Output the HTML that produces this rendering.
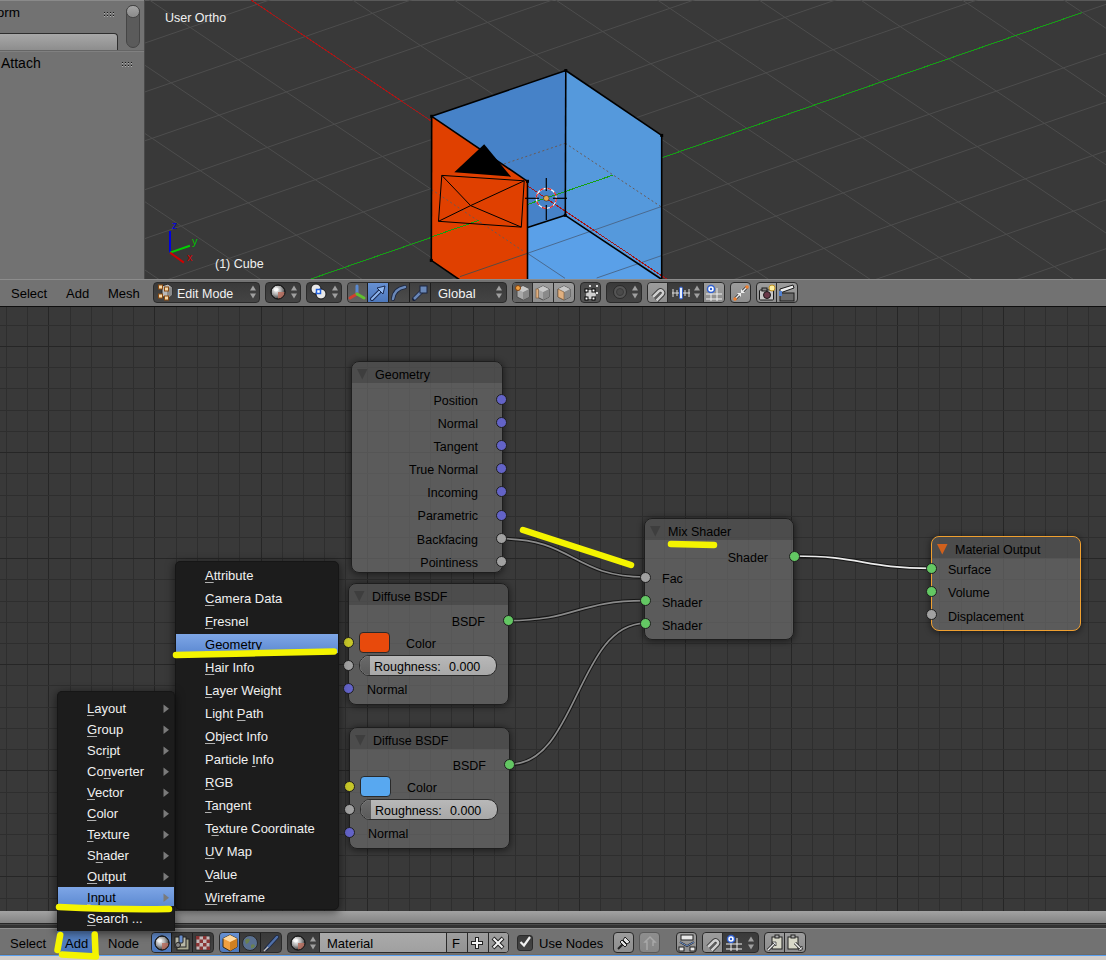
<!DOCTYPE html><html><head><meta charset="utf-8"><style>
*{margin:0;padding:0;box-sizing:border-box}
html,body{width:1106px;height:960px;overflow:hidden;background:#393939;font-family:"Liberation Sans", sans-serif;}
.a{position:absolute}
.t{position:absolute;white-space:nowrap;line-height:1;}
svg{position:absolute;left:0;top:0}
</style></head><body>

<div class="a" style="left:0;top:0;width:144px;height:279px;background:#727272"></div>
<div class="a" style="left:0;top:0;width:144px;height:1px;background:#8a8a8a"></div>
<div class="a" style="left:144px;top:0;width:1px;height:279px;background:#4a4a4a"></div>
<div class="t" style="left:-41px;top:6px;font-size:13.5px;color:#000">Transform</div>
<div class="a" style="left:-6px;top:33px;width:124px;height:17px;border:1px solid #2e2e2e;border-bottom:none;border-radius:4px 4px 0 0;background:linear-gradient(#a8a8a8,#8d8d8d)"></div>
<div class="a" style="left:0;top:50px;width:144px;height:1px;background:#656565"></div>
<div class="a" style="left:0;top:51px;width:144px;height:1px;background:#808080"></div>
<div class="t" style="left:1px;top:56px;font-size:14px;color:#000">Attach</div>
<div class="a" style="left:126px;top:5px;width:14px;height:43px;border:1px solid #454545;border-radius:7px;background:#5b5b5b"></div>
<div class="a" style="left:126px;top:5px;width:14px;height:13px;border:1px solid #454545;border-radius:7px;background:linear-gradient(#a5a5a5,#8a8a8a)"></div>
<div class="a" style="left:104px;top:12px;width:1px;height:1px;background:#1a1a1a"></div><div class="a" style="left:104px;top:13px;width:1px;height:1px;background:#b0b0b0"></div><div class="a" style="left:104px;top:15px;width:1px;height:1px;background:#1a1a1a"></div><div class="a" style="left:104px;top:16px;width:1px;height:1px;background:#b0b0b0"></div><div class="a" style="left:107px;top:12px;width:1px;height:1px;background:#1a1a1a"></div><div class="a" style="left:107px;top:13px;width:1px;height:1px;background:#b0b0b0"></div><div class="a" style="left:107px;top:15px;width:1px;height:1px;background:#1a1a1a"></div><div class="a" style="left:107px;top:16px;width:1px;height:1px;background:#b0b0b0"></div><div class="a" style="left:110px;top:12px;width:1px;height:1px;background:#1a1a1a"></div><div class="a" style="left:110px;top:13px;width:1px;height:1px;background:#b0b0b0"></div><div class="a" style="left:110px;top:15px;width:1px;height:1px;background:#1a1a1a"></div><div class="a" style="left:110px;top:16px;width:1px;height:1px;background:#b0b0b0"></div><div class="a" style="left:113px;top:12px;width:1px;height:1px;background:#1a1a1a"></div><div class="a" style="left:113px;top:13px;width:1px;height:1px;background:#b0b0b0"></div><div class="a" style="left:113px;top:15px;width:1px;height:1px;background:#1a1a1a"></div><div class="a" style="left:113px;top:16px;width:1px;height:1px;background:#b0b0b0"></div>
<div class="a" style="left:122px;top:62px;width:1px;height:1px;background:#1a1a1a"></div><div class="a" style="left:122px;top:63px;width:1px;height:1px;background:#b0b0b0"></div><div class="a" style="left:122px;top:65px;width:1px;height:1px;background:#1a1a1a"></div><div class="a" style="left:122px;top:66px;width:1px;height:1px;background:#b0b0b0"></div><div class="a" style="left:125px;top:62px;width:1px;height:1px;background:#1a1a1a"></div><div class="a" style="left:125px;top:63px;width:1px;height:1px;background:#b0b0b0"></div><div class="a" style="left:125px;top:65px;width:1px;height:1px;background:#1a1a1a"></div><div class="a" style="left:125px;top:66px;width:1px;height:1px;background:#b0b0b0"></div><div class="a" style="left:128px;top:62px;width:1px;height:1px;background:#1a1a1a"></div><div class="a" style="left:128px;top:63px;width:1px;height:1px;background:#b0b0b0"></div><div class="a" style="left:128px;top:65px;width:1px;height:1px;background:#1a1a1a"></div><div class="a" style="left:128px;top:66px;width:1px;height:1px;background:#b0b0b0"></div><div class="a" style="left:131px;top:62px;width:1px;height:1px;background:#1a1a1a"></div><div class="a" style="left:131px;top:63px;width:1px;height:1px;background:#b0b0b0"></div><div class="a" style="left:131px;top:65px;width:1px;height:1px;background:#1a1a1a"></div><div class="a" style="left:131px;top:66px;width:1px;height:1px;background:#b0b0b0"></div>
<div class="a" style="left:145px;top:0;width:961px;height:279px;background:#393939;overflow:hidden">
<div class="a" style="left:0;top:0;width:961px;height:1px;background:#595959"></div>
<svg width="961" height="279" viewBox="145 0 961 279" style="left:0;top:0">
<line x1="-2749.96" y1="-1196.64" x2="2230.84" y2="2148.76" stroke="#4d4d4d" stroke-width="1" /><line x1="-2682.86" y1="-1219.82" x2="2297.94" y2="2125.58" stroke="#4d4d4d" stroke-width="1" /><line x1="-2615.76" y1="-1243.00" x2="2365.04" y2="2102.40" stroke="#4d4d4d" stroke-width="1" /><line x1="-2548.66" y1="-1266.18" x2="2432.14" y2="2079.22" stroke="#4d4d4d" stroke-width="1" /><line x1="-2481.56" y1="-1289.36" x2="2499.24" y2="2056.04" stroke="#4d4d4d" stroke-width="1" /><line x1="-2414.46" y1="-1312.54" x2="2566.34" y2="2032.86" stroke="#4d4d4d" stroke-width="1" /><line x1="-2347.36" y1="-1335.72" x2="2633.44" y2="2009.68" stroke="#4d4d4d" stroke-width="1" /><line x1="-2280.26" y1="-1358.90" x2="2700.54" y2="1986.50" stroke="#4d4d4d" stroke-width="1" /><line x1="-2213.16" y1="-1382.08" x2="2767.64" y2="1963.32" stroke="#4d4d4d" stroke-width="1" /><line x1="-2146.06" y1="-1405.26" x2="2834.74" y2="1940.14" stroke="#4d4d4d" stroke-width="1" /><line x1="-2078.96" y1="-1428.44" x2="2901.84" y2="1916.96" stroke="#4d4d4d" stroke-width="1" /><line x1="-2011.86" y1="-1451.62" x2="2968.94" y2="1893.78" stroke="#4d4d4d" stroke-width="1" /><line x1="-1944.76" y1="-1474.80" x2="3036.04" y2="1870.60" stroke="#4d4d4d" stroke-width="1" /><line x1="-1877.66" y1="-1497.98" x2="3103.14" y2="1847.42" stroke="#4d4d4d" stroke-width="1" /><line x1="-1810.56" y1="-1521.16" x2="3170.24" y2="1824.24" stroke="#4d4d4d" stroke-width="1" /><line x1="-1743.46" y1="-1544.34" x2="3237.34" y2="1801.06" stroke="#4d4d4d" stroke-width="1" /><line x1="-1676.36" y1="-1567.52" x2="3304.44" y2="1777.88" stroke="#4d4d4d" stroke-width="1" /><line x1="-1609.26" y1="-1590.70" x2="3371.54" y2="1754.70" stroke="#4d4d4d" stroke-width="1" /><line x1="-1542.16" y1="-1613.88" x2="3438.64" y2="1731.52" stroke="#4d4d4d" stroke-width="1" /><line x1="-1475.06" y1="-1637.06" x2="3505.74" y2="1708.34" stroke="#4d4d4d" stroke-width="1" /><line x1="-1407.96" y1="-1660.24" x2="3572.84" y2="1685.16" stroke="#4d4d4d" stroke-width="1" /><line x1="-1340.86" y1="-1683.42" x2="3639.94" y2="1661.98" stroke="#4d4d4d" stroke-width="1" /><line x1="-1273.76" y1="-1706.60" x2="3707.04" y2="1638.80" stroke="#4d4d4d" stroke-width="1" /><line x1="-1206.66" y1="-1729.78" x2="3774.14" y2="1615.62" stroke="#4d4d4d" stroke-width="1" /><line x1="-1139.56" y1="-1752.96" x2="3841.24" y2="1592.44" stroke="#4d4d4d" stroke-width="1" /><line x1="-1072.46" y1="-1776.14" x2="3908.34" y2="1569.26" stroke="#4d4d4d" stroke-width="1" /><line x1="-2962.77" y1="725.54" x2="2708.37" y2="-1233.58" stroke="#4d4d4d" stroke-width="1" /><line x1="-2914.71" y1="757.82" x2="2756.43" y2="-1201.30" stroke="#4d4d4d" stroke-width="1" /><line x1="-2866.65" y1="790.10" x2="2804.49" y2="-1169.02" stroke="#4d4d4d" stroke-width="1" /><line x1="-2818.59" y1="822.38" x2="2852.55" y2="-1136.74" stroke="#4d4d4d" stroke-width="1" /><line x1="-2770.53" y1="854.66" x2="2900.61" y2="-1104.46" stroke="#4d4d4d" stroke-width="1" /><line x1="-2722.47" y1="886.94" x2="2948.67" y2="-1072.18" stroke="#4d4d4d" stroke-width="1" /><line x1="-2674.41" y1="919.22" x2="2996.73" y2="-1039.90" stroke="#4d4d4d" stroke-width="1" /><line x1="-2626.35" y1="951.50" x2="3044.79" y2="-1007.62" stroke="#4d4d4d" stroke-width="1" /><line x1="-2578.29" y1="983.78" x2="3092.85" y2="-975.34" stroke="#4d4d4d" stroke-width="1" /><line x1="-2530.23" y1="1016.06" x2="3140.91" y2="-943.06" stroke="#4d4d4d" stroke-width="1" /><line x1="-2482.17" y1="1048.34" x2="3188.97" y2="-910.78" stroke="#4d4d4d" stroke-width="1" /><line x1="-2434.11" y1="1080.62" x2="3237.03" y2="-878.50" stroke="#4d4d4d" stroke-width="1" /><line x1="-2386.05" y1="1112.90" x2="3285.09" y2="-846.22" stroke="#4d4d4d" stroke-width="1" /><line x1="-2337.99" y1="1145.18" x2="3333.15" y2="-813.94" stroke="#4d4d4d" stroke-width="1" /><line x1="-2289.93" y1="1177.46" x2="3381.21" y2="-781.66" stroke="#4d4d4d" stroke-width="1" /><line x1="-2241.87" y1="1209.74" x2="3429.27" y2="-749.38" stroke="#4d4d4d" stroke-width="1" /><line x1="-2193.81" y1="1242.02" x2="3477.33" y2="-717.10" stroke="#4d4d4d" stroke-width="1" /><line x1="-2145.75" y1="1274.30" x2="3525.39" y2="-684.82" stroke="#4d4d4d" stroke-width="1" /><line x1="-2097.69" y1="1306.58" x2="3573.45" y2="-652.54" stroke="#4d4d4d" stroke-width="1" /><line x1="-2049.63" y1="1338.86" x2="3621.51" y2="-620.26" stroke="#4d4d4d" stroke-width="1" /><line x1="-2001.57" y1="1371.14" x2="3669.57" y2="-587.98" stroke="#4d4d4d" stroke-width="1" /><line x1="-1953.51" y1="1403.42" x2="3717.63" y2="-555.70" stroke="#4d4d4d" stroke-width="1" /><line x1="-1905.45" y1="1435.70" x2="3765.69" y2="-523.42" stroke="#4d4d4d" stroke-width="1" /><line x1="-1857.39" y1="1467.98" x2="3813.75" y2="-491.14" stroke="#4d4d4d" stroke-width="1" /><line x1="-1809.33" y1="1500.26" x2="3861.81" y2="-458.86" stroke="#4d4d4d" stroke-width="1" /><line x1="-1761.27" y1="1532.54" x2="3909.87" y2="-426.58" stroke="#4d4d4d" stroke-width="1" /><line x1="-1713.21" y1="1564.82" x2="3957.93" y2="-394.30" stroke="#4d4d4d" stroke-width="1" /><line x1="-1665.15" y1="1597.10" x2="4005.99" y2="-362.02" stroke="#4d4d4d" stroke-width="1" />
<line x1="-1944.76" y1="-1474.80" x2="3036.04" y2="1870.60" stroke="#a81616" stroke-width="1" shape-rendering="crispEdges"/>
<line x1="545.64" y1="197.9" x2="1082.44" y2="12.46" stroke="#14a014" stroke-width="1" shape-rendering="crispEdges"/>
<line x1="545.64" y1="197.9" x2="143.04000000000002" y2="336.98" stroke="#14a014" stroke-width="1" shape-rendering="crispEdges"/>
<polygon points="431.7,116.3 565.8,70.5 565.3,215.3 527.5,227.5 527.5,181.3" fill="#4682c8" />
<polygon points="565.8,70.5 661.7,135.4 661.7,280.0 664.0,280.0 565.3,215.3" fill="#5599dc" />
<polygon points="565.3,215.3 664.0,280.0 527.5,280.0 527.5,227.5" fill="#5aa0e8" />
<polygon points="431.7,116.3 527.5,181.3 527.5,280.0 460.0,280.0 431.3,260.4" fill="#e04000" />
<g stroke="#6a5a55" stroke-width="1" stroke-dasharray="2,2.5">
<line x1="504" y1="164" x2="565.3" y2="143.3"/><line x1="565.3" y1="143.3" x2="661" y2="206.7"/><line x1="431.5" y1="189.5" x2="525" y2="252.3"/>
</g>
<g stroke="#4a6a90" stroke-width="1">
<line x1="527.5" y1="253.3" x2="460" y2="276.6" stroke="#5a4a40"/><line x1="661" y1="206.7" x2="527.5" y2="253.3"/><line x1="527.5" y1="253.3" x2="565" y2="278.3"/><line x1="661" y1="255.8" x2="596.7" y2="278"/>
</g>
<line x1="527" y1="185.5" x2="665" y2="278" stroke="#a81616" stroke-width="1" shape-rendering="crispEdges"/>
<line x1="527" y1="204.6" x2="613.3" y2="175" stroke="#14a014" stroke-width="1" shape-rendering="crispEdges"/>
<line x1="432" y1="236.7" x2="479" y2="220.4" stroke="#14a014" stroke-width="1" shape-rendering="crispEdges"/>
<g stroke="#000" stroke-width="1.6" fill="none">
<line x1="431.7" y1="116.3" x2="565.8" y2="70.5"/>
<line x1="565.8" y1="70.5" x2="661.7" y2="135.4"/>
<line x1="661.7" y1="135.4" x2="661.7" y2="280"/>
<line x1="431.7" y1="116.3" x2="431.3" y2="260.4"/>
<line x1="431.3" y1="260.4" x2="460" y2="280"/>
<line x1="431.7" y1="116.3" x2="527.5" y2="181.3"/>
<line x1="527.5" y1="181.3" x2="527.5" y2="280"/>
<line x1="565.8" y1="70.5" x2="565.3" y2="215.3"/>
<line x1="565.3" y1="215.3" x2="527.5" y2="227.5"/>
<line x1="565.3" y1="215.3" x2="661" y2="279"/>
</g>
<rect x="430.2" y="114.8" width="3" height="3" fill="#000"/>
<rect x="564.3" y="69.0" width="3" height="3" fill="#000"/>
<rect x="660.2" y="133.9" width="3" height="3" fill="#000"/>
<rect x="526.0" y="179.8" width="3" height="3" fill="#000"/>
<rect x="563.8" y="213.8" width="3" height="3" fill="#000"/>
<rect x="429.8" y="258.9" width="3" height="3" fill="#000"/>
<polygon points="484.2,144.3 454.3,172.3 511.1,176.7" fill="#000" />
<g stroke="#000" stroke-width="1" fill="none"><polygon points="441.8,175.4 524.2,180.8 521.3,227.1 438.5,221.3"/><polyline points="441.8,175.4 470.6,205.6 521.3,227.1"/><polyline points="524.2,180.8 470.6,205.6 438.5,221.3"/></g>
<circle cx="546.3" cy="198.3" r="10" fill="none" stroke="#fff" stroke-width="1.2"/>
<circle cx="546.3" cy="198.3" r="10" fill="none" stroke="#e02020" stroke-width="1.2" stroke-dasharray="4,4"/>
<g stroke="#000" stroke-width="1.2"><line x1="546.3" y1="178" x2="546.3" y2="191"/><line x1="546.3" y1="205" x2="546.3" y2="220"/><line x1="525" y1="198.3" x2="539" y2="198.3"/><line x1="553" y1="198.3" x2="567" y2="198.3"/></g>
<circle cx="546.3" cy="198.3" r="2.8" fill="#e8a84c" stroke="#222" stroke-width="0.6"/>
<line x1="170" y1="252.6" x2="170" y2="231" stroke="#0000e0" stroke-width="2"/>
<line x1="170" y1="252.6" x2="189.9" y2="245.8" stroke="#00d000" stroke-width="2"/>
<line x1="170" y1="252.6" x2="183.9" y2="262.6" stroke="#d00000" stroke-width="2"/>
</svg>
<div class="t" style="left:20px;top:12px;font-size:12.5px;color:#f0f0f0">User Ortho</div>
<div class="t" style="left:70px;top:258px;font-size:12.5px;color:#f0f0f0">(1) Cube</div>
<div class="t" style="left:27px;top:221px;font-size:10px;color:#0000e0">z</div>
<div class="t" style="left:47px;top:236px;font-size:11px;color:#00c000">y</div>
<div class="t" style="left:42px;top:252px;font-size:11px;color:#d00000">x</div>
</div>
<div class="a" style="left:0;top:279px;width:1106px;height:27px;background:#727272"></div>
<div class="a" style="left:0;top:279px;width:1106px;height:1px;background:#8c8c8c"></div>
<div class="a" style="left:0;top:306px;width:1106px;height:1px;background:#0e0e0e"></div>
<div class="t" style="left:11px;top:287px;font-size:13px;color:#000">Select</div>
<div class="t" style="left:66px;top:287px;font-size:13px;color:#000">Add</div>
<div class="t" style="left:108px;top:287px;font-size:13px;color:#000">Mesh</div>
<div class="a" style="left:153px;top:282px;width:107px;height:21px;background:linear-gradient(#3a3a3a,#444444);border:1px solid #2a2a2a;border-radius:4px;"></div>
<svg width="12" height="16" style="left:247px;top:284px"><polygon points="6,1.5 9,6.5 3,6.5" fill="#a0a0a0"/><polygon points="6,14.5 9,9.5 3,9.5" fill="#a0a0a0"/></svg>
<div class="t" style="left:177px;top:288px;font-size:12.5px;color:#f2f2f2">Edit Mode</div>
<svg width="18" height="18" style="left:157px;top:283px"><polygon points="5,3 11,1 15,4 15,12 10,16 5,13" fill="#b8b8b8" stroke="#2a2a2a" stroke-width="1"/><polygon points="10,5 15,4 15,12 10,16" fill="#8a8a8a"/><rect x="1.5" y="2" width="4" height="4" fill="#f5d8a8" stroke="#8a4a10"/><rect x="7.5" y="4" width="4" height="4" fill="#f5d8a8" stroke="#8a4a10"/><rect x="1.5" y="11" width="4" height="4" fill="#f5d8a8" stroke="#8a4a10"/><rect x="7.5" y="13" width="4" height="4" fill="#f5d8a8" stroke="#8a4a10"/></svg>
<div class="a" style="left:265px;top:282px;width:36px;height:21px;background:linear-gradient(#3a3a3a,#444444);border:1px solid #2a2a2a;border-radius:4px;"></div>
<svg width="12" height="16" style="left:288px;top:284px"><polygon points="6,1.5 9,6.5 3,6.5" fill="#a0a0a0"/><polygon points="6,14.5 9,9.5 3,9.5" fill="#a0a0a0"/></svg>
<svg width="16" height="16" style="left:270px;top:284px"><defs><radialGradient id="sph" cx="38%" cy="35%" r="65%"><stop offset="0" stop-color="#ffffff"/><stop offset="0.5" stop-color="#b0b0b0"/><stop offset="1" stop-color="#3a3a3a"/></radialGradient><radialGradient id="sphr" cx="38%" cy="35%" r="65%"><stop offset="0" stop-color="#ffe0d0"/><stop offset="0.5" stop-color="#c07060"/><stop offset="1" stop-color="#5a2a20"/></radialGradient></defs><circle cx="8" cy="8" r="7" fill="url(#sph)" stroke="#1a1a1a"/><path d="M8,8 L15,8 A7,7 0 0 1 8,15 Z" fill="#b87060" opacity="0.85"/><circle cx="8" cy="8" r="7" fill="none" stroke="#1a1a1a"/><ellipse cx="6" cy="5.5" rx="2.5" ry="2" fill="#fff" opacity="0.7"/></svg>
<div class="a" style="left:306px;top:282px;width:36px;height:21px;background:linear-gradient(#3a3a3a,#444444);border:1px solid #2a2a2a;border-radius:4px;"></div>
<svg width="12" height="16" style="left:329px;top:284px"><polygon points="6,1.5 9,6.5 3,6.5" fill="#a0a0a0"/><polygon points="6,14.5 9,9.5 3,9.5" fill="#a0a0a0"/></svg>
<svg width="18" height="18" style="left:310px;top:283px"><circle cx="6" cy="6" r="5" fill="#e8e8e8" stroke="#1a1a1a"/><circle cx="11" cy="11" r="5" fill="#e8e8e8" stroke="#1a1a1a"/><rect x="6.5" y="6.5" width="4" height="4" fill="#fff" stroke="#2060e0" stroke-width="1.5"/></svg>
<div class="a" style="left:347px;top:282px;width:160px;height:21px;background:linear-gradient(#3a3a3a,#444444);border:1px solid #2a2a2a;border-radius:4px;"></div>
<div class="a" style="left:348px;top:283px;width:19px;height:19px;background:linear-gradient(#585858,#626262);border-radius:3px 0 0 3px"></div>
<div class="a" style="left:368px;top:283px;width:20px;height:19px;background:linear-gradient(#6690d2,#4d78bc)"></div>
<div class="a" style="left:389px;top:283px;width:20px;height:19px;background:linear-gradient(#404040,#4c4c4c)"></div>
<div class="a" style="left:410px;top:283px;width:20px;height:19px;background:linear-gradient(#404040,#4c4c4c)"></div>
<div class="a" style="left:367px;top:283px;width:1px;height:19px;background:#1e1e1e"></div>
<div class="a" style="left:388px;top:283px;width:1px;height:19px;background:#1e1e1e"></div>
<div class="a" style="left:409px;top:283px;width:1px;height:19px;background:#1e1e1e"></div>
<div class="a" style="left:430px;top:283px;width:1px;height:19px;background:#1e1e1e"></div>
<svg width="20" height="20" style="left:347px;top:283px"><line x1="10" y1="11" x2="10" y2="3" stroke="#5a8ad0" stroke-width="3" stroke-linecap="round"/><line x1="10" y1="11" x2="3" y2="15" stroke="#d04030" stroke-width="3" stroke-linecap="round"/><line x1="10" y1="11" x2="17" y2="15" stroke="#60c030" stroke-width="3" stroke-linecap="round"/></svg>
<svg width="20" height="20" style="left:368px;top:283px"><line x1="4" y1="16" x2="13" y2="7" stroke="#1a2a50" stroke-width="4" stroke-linecap="round"/><line x1="4" y1="16" x2="13" y2="7" stroke="#90b8f0" stroke-width="2" stroke-linecap="round"/><polygon points="17,3 9,5 15,11" fill="#90b8f0" stroke="#1a2a50"/></svg>
<svg width="20" height="20" style="left:389px;top:283px"><path d="M4,16 Q5,6 16,4" fill="none" stroke="#1a2540" stroke-width="4" stroke-linecap="round"/><path d="M4,16 Q5,6 16,4" fill="none" stroke="#6a88b8" stroke-width="2.5" stroke-linecap="round"/></svg>
<svg width="20" height="20" style="left:410px;top:283px"><line x1="4" y1="16" x2="12" y2="8" stroke="#1a2540" stroke-width="4" stroke-linecap="round"/><line x1="4" y1="16" x2="12" y2="8" stroke="#6a88b8" stroke-width="2.5"/><rect x="10" y="3" width="7" height="7" fill="#6a88b8" stroke="#1a2540"/></svg>
<div class="t" style="left:438px;top:287px;font-size:13px;color:#f2f2f2">Global</div>
<svg width="12" height="16" style="left:493px;top:284px"><polygon points="6,1.5 9,6.5 3,6.5" fill="#a0a0a0"/><polygon points="6,14.5 9,9.5 3,9.5" fill="#a0a0a0"/></svg>
<div class="a" style="left:512px;top:282px;width:63px;height:21px;background:linear-gradient(#9c9c9c,#8e8e8e);border:1px solid #2a2a2a;border-radius:4px;"></div>
<div class="a" style="left:513px;top:283px;width:19px;height:19px;background:linear-gradient(#5a5a5a,#646464);border-radius:3px 0 0 3px"></div>
<div class="a" style="left:532px;top:283px;width:1px;height:19px;background:#2a2a2a"></div>
<div class="a" style="left:553px;top:283px;width:1px;height:19px;background:#2a2a2a"></div>
<svg width="18" height="18" style="left:514px;top:284px"><polygon points="9,2 15,5 15,13 9,16 3,13 3,5" fill="#a8a8a8" stroke="#4a4a4a"/><polygon points="9,8 15,5 15,13 9,16" fill="#8a8a8a"/><polygon points="9,2 15,5 9,8 3,5" fill="#c8c8c8"/><circle cx="4" cy="4" r="2.5" fill="#f0a040" stroke="#804010"/></svg>
<svg width="18" height="18" style="left:534px;top:284px"><polygon points="9,2 15,5 15,13 9,16 3,13 3,5" fill="#a8a8a8" stroke="#4a4a4a"/><polygon points="9,8 15,5 15,13 9,16" fill="#8a8a8a"/><polygon points="9,2 15,5 9,8 3,5" fill="#c8c8c8"/><rect x="2" y="5" width="2.5" height="9" fill="#e0b080" stroke="#806040" stroke-width="0.7"/></svg>
<svg width="18" height="18" style="left:555px;top:284px"><polygon points="9,2 15,5 15,13 9,16 3,13 3,5" fill="#a8a8a8" stroke="#4a4a4a"/><polygon points="9,8 15,5 15,13 9,16" fill="#8a8a8a"/><polygon points="9,2 15,5 9,8 3,5" fill="#c8c8c8"/><polygon points="3,5 9,8 9,16 3,13" fill="#e0b080" stroke="#806040" stroke-width="0.7"/></svg>
<div class="a" style="left:580px;top:282px;width:21px;height:21px;background:linear-gradient(#4a4a4a,#545454);border:1px solid #2a2a2a;border-radius:4px;"></div>
<svg width="18" height="18" style="left:582px;top:284px"><polygon points="5,6 12,6 14,11 12,15 5,15 4,11" fill="#d0d0d0"/><g fill="#fff" stroke="#000" stroke-width="1"><rect x="3" y="5" width="3" height="3"/><rect x="10" y="5" width="3" height="3"/><rect x="3" y="13" width="3" height="3"/><rect x="10" y="13" width="3" height="3"/></g><g fill="#ddd"><rect x="7" y="1" width="2" height="2"/><rect x="14" y="1" width="2" height="2"/><rect x="14" y="8" width="2" height="2"/></g></svg>
<div class="a" style="left:606px;top:282px;width:36px;height:21px;background:linear-gradient(#3a3a3a,#444444);border:1px solid #2a2a2a;border-radius:4px;"></div>
<svg width="12" height="16" style="left:629px;top:284px"><polygon points="6,1.5 9,6.5 3,6.5" fill="#a0a0a0"/><polygon points="6,14.5 9,9.5 3,9.5" fill="#a0a0a0"/></svg>
<svg width="16" height="16" style="left:612px;top:284px"><circle cx="8" cy="8" r="6.5" fill="#555" stroke="#2a2a2a"/><circle cx="8" cy="8" r="3.5" fill="#4a4a4a" stroke="#3a3a3a"/></svg>
<div class="a" style="left:647px;top:282px;width:78px;height:21px;background:linear-gradient(#3a3a3a,#444444);border:1px solid #2a2a2a;border-radius:4px;"></div>
<div class="a" style="left:648px;top:283px;width:19px;height:19px;background:linear-gradient(#9c9c9c,#8e8e8e);border-radius:3px 0 0 3px"></div>
<div class="a" style="left:704px;top:283px;width:20px;height:19px;background:linear-gradient(#9c9c9c,#8e8e8e);border-radius:0 3px 3px 0"></div>
<div class="a" style="left:667px;top:283px;width:1px;height:19px;background:#2a2a2a"></div><div class="a" style="left:703px;top:283px;width:1px;height:19px;background:#2a2a2a"></div>
<svg width="18" height="18" style="left:649px;top:284px"><path d="M4,13 L10,7 A2.5,2.5 0 0 1 13.5,10.5 L7.5,16.5" fill="none" stroke="#3a3a3a" stroke-width="4.5"/><path d="M4,13 L10,7 A2.5,2.5 0 0 1 13.5,10.5 L7.5,16.5" fill="none" stroke="#cfcfcf" stroke-width="2.5"/></svg>
<svg width="22" height="18" style="left:670px;top:284px"><line x1="2" y1="9" x2="20" y2="9" stroke="#ddd"/><line x1="3" y1="5" x2="3" y2="13" stroke="#ddd"/><line x1="7" y1="6" x2="7" y2="12" stroke="#ddd"/><line x1="15" y1="6" x2="15" y2="12" stroke="#ddd"/><line x1="19" y1="5" x2="19" y2="13" stroke="#ddd"/><rect x="9.5" y="3" width="3" height="12" rx="1.5" fill="#e8f0ff" stroke="#3060d0"/></svg>
<svg width="12" height="16" style="left:691px;top:284px"><polygon points="6,1.5 9,6.5 3,6.5" fill="#a0a0a0"/><polygon points="6,14.5 9,9.5 3,9.5" fill="#a0a0a0"/></svg>
<svg width="18" height="18" style="left:705px;top:284px"><g stroke="#f0f0f0"><line x1="6" y1="4" x2="6" y2="17"/><line x1="12" y1="4" x2="12" y2="17"/><line x1="1" y1="10" x2="17" y2="10"/><line x1="1" y1="15" x2="17" y2="15"/></g><circle cx="6" cy="5" r="3.5" fill="#fff" stroke="#3060d0" stroke-width="1.5"/><circle cx="6" cy="5" r="1.2" fill="#3060d0"/></svg>
<div class="a" style="left:730px;top:282px;width:21px;height:21px;background:linear-gradient(#9c9c9c,#8e8e8e);border:1px solid #2a2a2a;border-radius:4px;"></div>
<svg width="18" height="18" style="left:732px;top:284px"><g stroke="#333" stroke-width="3"><line x1="3" y1="15" x2="8" y2="10"/><line x1="15" y1="3" x2="10" y2="8"/></g><g stroke="#eee" stroke-width="1.5"><line x1="3" y1="15" x2="8" y2="10"/><line x1="15" y1="3" x2="10" y2="8"/></g><polygon points="9,9 9,13 5,9" fill="#eee"/><polygon points="9,9 9,5 13,9" fill="#eee"/><circle cx="3" cy="15" r="1.8" fill="#f08030"/><circle cx="15" cy="3" r="1.8" fill="#f08030"/></svg>
<div class="a" style="left:756px;top:282px;width:42px;height:21px;background:linear-gradient(#9c9c9c,#8e8e8e);border:1px solid #2a2a2a;border-radius:4px;"></div>
<div class="a" style="left:776px;top:283px;width:1px;height:19px;background:#2a2a2a"></div>
<svg width="18" height="18" style="left:758px;top:284px"><rect x="1.5" y="6" width="14" height="10" rx="1" fill="#c8c8c8" stroke="#1a1a1a"/><rect x="4" y="4" width="5" height="3" fill="#888" stroke="#1a1a1a"/><circle cx="9" cy="11" r="3.5" fill="#6a3a4a" stroke="#1a1a1a"/><circle cx="14" cy="4" r="3" fill="#fff0a0" stroke="#c09020"/></svg>
<svg width="18" height="18" style="left:778px;top:284px"><rect x="2" y="9" width="14" height="8" fill="#6a6a6a" stroke="#1a1a1a"/><polygon points="2,9 2,5 15,1 16,4" fill="#eee" stroke="#1a1a1a"/><rect x="1" y="7" width="3" height="5" fill="#5080d0"/></svg>
<div class="a" style="left:0;top:307px;width:1106px;height:604px;background:#393939;overflow:hidden">
<svg width="1106" height="604" viewBox="0 307 1106 604"><line x1="6.5" y1="307" x2="6.5" y2="911" stroke="#2e2e2e" stroke-width="1"/><line x1="27.5" y1="307" x2="27.5" y2="911" stroke="#2e2e2e" stroke-width="1"/><line x1="48.5" y1="307" x2="48.5" y2="911" stroke="#262626" stroke-width="1"/><line x1="70.5" y1="307" x2="70.5" y2="911" stroke="#2e2e2e" stroke-width="1"/><line x1="91.5" y1="307" x2="91.5" y2="911" stroke="#2e2e2e" stroke-width="1"/><line x1="112.5" y1="307" x2="112.5" y2="911" stroke="#2e2e2e" stroke-width="1"/><line x1="133.5" y1="307" x2="133.5" y2="911" stroke="#2e2e2e" stroke-width="1"/><line x1="154.5" y1="307" x2="154.5" y2="911" stroke="#262626" stroke-width="1"/><line x1="176.5" y1="307" x2="176.5" y2="911" stroke="#2e2e2e" stroke-width="1"/><line x1="197.5" y1="307" x2="197.5" y2="911" stroke="#2e2e2e" stroke-width="1"/><line x1="218.5" y1="307" x2="218.5" y2="911" stroke="#2e2e2e" stroke-width="1"/><line x1="239.5" y1="307" x2="239.5" y2="911" stroke="#2e2e2e" stroke-width="1"/><line x1="261.5" y1="307" x2="261.5" y2="911" stroke="#262626" stroke-width="1"/><line x1="282.5" y1="307" x2="282.5" y2="911" stroke="#2e2e2e" stroke-width="1"/><line x1="303.5" y1="307" x2="303.5" y2="911" stroke="#2e2e2e" stroke-width="1"/><line x1="324.5" y1="307" x2="324.5" y2="911" stroke="#2e2e2e" stroke-width="1"/><line x1="345.5" y1="307" x2="345.5" y2="911" stroke="#2e2e2e" stroke-width="1"/><line x1="367.5" y1="307" x2="367.5" y2="911" stroke="#262626" stroke-width="1"/><line x1="388.5" y1="307" x2="388.5" y2="911" stroke="#2e2e2e" stroke-width="1"/><line x1="409.5" y1="307" x2="409.5" y2="911" stroke="#2e2e2e" stroke-width="1"/><line x1="430.5" y1="307" x2="430.5" y2="911" stroke="#2e2e2e" stroke-width="1"/><line x1="451.5" y1="307" x2="451.5" y2="911" stroke="#2e2e2e" stroke-width="1"/><line x1="473.5" y1="307" x2="473.5" y2="911" stroke="#262626" stroke-width="1"/><line x1="494.5" y1="307" x2="494.5" y2="911" stroke="#2e2e2e" stroke-width="1"/><line x1="515.5" y1="307" x2="515.5" y2="911" stroke="#2e2e2e" stroke-width="1"/><line x1="536.5" y1="307" x2="536.5" y2="911" stroke="#2e2e2e" stroke-width="1"/><line x1="558.5" y1="307" x2="558.5" y2="911" stroke="#2e2e2e" stroke-width="1"/><line x1="579.5" y1="307" x2="579.5" y2="911" stroke="#262626" stroke-width="1"/><line x1="600.5" y1="307" x2="600.5" y2="911" stroke="#2e2e2e" stroke-width="1"/><line x1="621.5" y1="307" x2="621.5" y2="911" stroke="#2e2e2e" stroke-width="1"/><line x1="642.5" y1="307" x2="642.5" y2="911" stroke="#2e2e2e" stroke-width="1"/><line x1="664.5" y1="307" x2="664.5" y2="911" stroke="#2e2e2e" stroke-width="1"/><line x1="685.5" y1="307" x2="685.5" y2="911" stroke="#262626" stroke-width="1"/><line x1="706.5" y1="307" x2="706.5" y2="911" stroke="#2e2e2e" stroke-width="1"/><line x1="727.5" y1="307" x2="727.5" y2="911" stroke="#2e2e2e" stroke-width="1"/><line x1="748.5" y1="307" x2="748.5" y2="911" stroke="#2e2e2e" stroke-width="1"/><line x1="770.5" y1="307" x2="770.5" y2="911" stroke="#2e2e2e" stroke-width="1"/><line x1="791.5" y1="307" x2="791.5" y2="911" stroke="#262626" stroke-width="1"/><line x1="812.5" y1="307" x2="812.5" y2="911" stroke="#2e2e2e" stroke-width="1"/><line x1="833.5" y1="307" x2="833.5" y2="911" stroke="#2e2e2e" stroke-width="1"/><line x1="855.5" y1="307" x2="855.5" y2="911" stroke="#2e2e2e" stroke-width="1"/><line x1="876.5" y1="307" x2="876.5" y2="911" stroke="#2e2e2e" stroke-width="1"/><line x1="897.5" y1="307" x2="897.5" y2="911" stroke="#262626" stroke-width="1"/><line x1="918.5" y1="307" x2="918.5" y2="911" stroke="#2e2e2e" stroke-width="1"/><line x1="939.5" y1="307" x2="939.5" y2="911" stroke="#2e2e2e" stroke-width="1"/><line x1="961.5" y1="307" x2="961.5" y2="911" stroke="#2e2e2e" stroke-width="1"/><line x1="982.5" y1="307" x2="982.5" y2="911" stroke="#2e2e2e" stroke-width="1"/><line x1="1003.5" y1="307" x2="1003.5" y2="911" stroke="#262626" stroke-width="1"/><line x1="1024.5" y1="307" x2="1024.5" y2="911" stroke="#2e2e2e" stroke-width="1"/><line x1="1045.5" y1="307" x2="1045.5" y2="911" stroke="#2e2e2e" stroke-width="1"/><line x1="1067.5" y1="307" x2="1067.5" y2="911" stroke="#2e2e2e" stroke-width="1"/><line x1="1088.5" y1="307" x2="1088.5" y2="911" stroke="#2e2e2e" stroke-width="1"/><line x1="0" y1="325.5" x2="1106" y2="325.5" stroke="#2e2e2e" stroke-width="1"/><line x1="0" y1="346.5" x2="1106" y2="346.5" stroke="#262626" stroke-width="1"/><line x1="0" y1="367.5" x2="1106" y2="367.5" stroke="#2e2e2e" stroke-width="1"/><line x1="0" y1="388.5" x2="1106" y2="388.5" stroke="#2e2e2e" stroke-width="1"/><line x1="0" y1="410.5" x2="1106" y2="410.5" stroke="#2e2e2e" stroke-width="1"/><line x1="0" y1="431.5" x2="1106" y2="431.5" stroke="#2e2e2e" stroke-width="1"/><line x1="0" y1="452.5" x2="1106" y2="452.5" stroke="#262626" stroke-width="1"/><line x1="0" y1="473.5" x2="1106" y2="473.5" stroke="#2e2e2e" stroke-width="1"/><line x1="0" y1="495.5" x2="1106" y2="495.5" stroke="#2e2e2e" stroke-width="1"/><line x1="0" y1="516.5" x2="1106" y2="516.5" stroke="#2e2e2e" stroke-width="1"/><line x1="0" y1="537.5" x2="1106" y2="537.5" stroke="#2e2e2e" stroke-width="1"/><line x1="0" y1="558.5" x2="1106" y2="558.5" stroke="#262626" stroke-width="1"/><line x1="0" y1="579.5" x2="1106" y2="579.5" stroke="#2e2e2e" stroke-width="1"/><line x1="0" y1="601.5" x2="1106" y2="601.5" stroke="#2e2e2e" stroke-width="1"/><line x1="0" y1="622.5" x2="1106" y2="622.5" stroke="#2e2e2e" stroke-width="1"/><line x1="0" y1="643.5" x2="1106" y2="643.5" stroke="#2e2e2e" stroke-width="1"/><line x1="0" y1="664.5" x2="1106" y2="664.5" stroke="#262626" stroke-width="1"/><line x1="0" y1="685.5" x2="1106" y2="685.5" stroke="#2e2e2e" stroke-width="1"/><line x1="0" y1="707.5" x2="1106" y2="707.5" stroke="#2e2e2e" stroke-width="1"/><line x1="0" y1="728.5" x2="1106" y2="728.5" stroke="#2e2e2e" stroke-width="1"/><line x1="0" y1="749.5" x2="1106" y2="749.5" stroke="#2e2e2e" stroke-width="1"/><line x1="0" y1="770.5" x2="1106" y2="770.5" stroke="#262626" stroke-width="1"/><line x1="0" y1="792.5" x2="1106" y2="792.5" stroke="#2e2e2e" stroke-width="1"/><line x1="0" y1="813.5" x2="1106" y2="813.5" stroke="#2e2e2e" stroke-width="1"/><line x1="0" y1="834.5" x2="1106" y2="834.5" stroke="#2e2e2e" stroke-width="1"/><line x1="0" y1="855.5" x2="1106" y2="855.5" stroke="#2e2e2e" stroke-width="1"/><line x1="0" y1="876.5" x2="1106" y2="876.5" stroke="#262626" stroke-width="1"/><line x1="0" y1="898.5" x2="1106" y2="898.5" stroke="#2e2e2e" stroke-width="1"/></svg>
</div>
<div class="a" style="left:0;top:911px;width:1106px;height:12px;background:linear-gradient(#a2a2a2,#838383)"></div>
<div class="a" style="left:0;top:923px;width:1106px;height:2px;background:#262626"></div>
<div class="a" style="left:0;top:924px;width:1106px;height:1px;background:#4a4a4a"></div>
<div class="a" style="left:0;top:925px;width:1106px;height:3px;background:#333"></div>
<div class="a" style="left:0;top:928px;width:1106px;height:1px;background:#8e8e8e"></div>
<div class="a" style="left:0;top:929px;width:1106px;height:25px;background:#727272"></div>
<div class="a" style="left:0;top:954px;width:1106px;height:1px;background:#6e6a66"></div>
<div class="a" style="left:0;top:955px;width:1106px;height:1px;background:#5aa0f0"></div>
<div class="a" style="left:0;top:956px;width:1106px;height:4px;background:#d2cecb"></div>
<div class="a" style="left:151px;top:932px;width:63px;height:21px;background:linear-gradient(#3a3a3a,#444);border:1px solid #2a2a2a;border-radius:4px;"></div>
<div class="a" style="left:152px;top:933px;width:19px;height:19px;background:linear-gradient(#6690d2,#4d78bc);border-radius:3px 0 0 3px"></div>
<div class="a" style="left:171px;top:933px;width:1px;height:19px;background:#1e1e1e"></div><div class="a" style="left:192px;top:933px;width:1px;height:19px;background:#1e1e1e"></div>
<div class="a" style="left:219px;top:932px;width:63px;height:21px;background:linear-gradient(#3a3a3a,#444);border:1px solid #2a2a2a;border-radius:4px;"></div>
<div class="a" style="left:220px;top:933px;width:19px;height:19px;background:linear-gradient(#6690d2,#4d78bc);border-radius:3px 0 0 3px"></div>
<div class="a" style="left:239px;top:933px;width:1px;height:19px;background:#1e1e1e"></div><div class="a" style="left:260px;top:933px;width:1px;height:19px;background:#1e1e1e"></div>
<svg width="16" height="16" style="left:153.5px;top:934.5px"><circle cx="8" cy="8" r="7" fill="url(#sph)" stroke="#1a1a1a"/><path d="M8,8 L15,8 A7,7 0 0 1 8,15 Z" fill="#b87060" opacity="0.85"/><circle cx="8" cy="8" r="7" fill="none" stroke="#1a1a1a"/><ellipse cx="5.5" cy="5.5" rx="2.5" ry="2" fill="#fff" opacity="0.7"/></svg>
<svg width="18" height="18" style="left:173px;top:934px"><rect x="4" y="5" width="12" height="11" fill="#a8a890" stroke="#222"/><rect x="2" y="3" width="11" height="10" fill="#b8b8a8" stroke="#222"/><rect x="6" y="1" width="4" height="8" rx="1" fill="#6a90d0" stroke="#222"/><circle cx="5" cy="11" r="2.5" fill="#888" stroke="#222"/></svg>
<svg width="16" height="16" style="left:195px;top:935px"><rect x="1" y="1" width="14" height="14" fill="#c4b8b8" stroke="#2a2a2a" stroke-width="0.8"/><g fill="#8a3434"><rect x="1" y="1" width="3.5" height="3.5"/><rect x="8" y="1" width="3.5" height="3.5"/><rect x="4.5" y="4.5" width="3.5" height="3.5"/><rect x="11.5" y="4.5" width="3.5" height="3.5"/><rect x="1" y="8" width="3.5" height="3.5"/><rect x="8" y="8" width="3.5" height="3.5"/><rect x="4.5" y="11.5" width="3.5" height="3.5"/><rect x="11.5" y="11.5" width="3.5" height="3.5"/></g></svg>
<svg width="18" height="18" style="left:221px;top:934px"><polygon points="9,1 16,4.5 16,13 9,17 2,13 2,4.5" fill="#f0a040" stroke="#3a2a10"/><polygon points="9,8 16,4.5 16,13 9,17" fill="#d08020"/><polygon points="9,1 16,4.5 9,8 2,4.5" fill="#ffd9a0"/></svg>
<svg width="18" height="18" style="left:241px;top:934px"><circle cx="9" cy="9" r="7.5" fill="#5a7090" stroke="#2a2a2a"/><path d="M4,6 Q7,3 9,6 Q8,9 5,10 Z M10,11 Q13,9 14,12 Q12,15 10,14 Z" fill="#6a8050"/></svg>
<svg width="18" height="18" style="left:262px;top:934px"><line x1="4" y1="15" x2="15" y2="3" stroke="#1a2540" stroke-width="4" stroke-linecap="round"/><line x1="6" y1="13" x2="15" y2="3" stroke="#5070a8" stroke-width="2.5" stroke-linecap="round"/><line x1="2" y1="17" x2="6" y2="13" stroke="#c0c0c0" stroke-width="1.5"/></svg>
<div class="a" style="left:287px;top:932px;width:222px;height:21px;background:linear-gradient(#3a3a3a,#444);border:1px solid #2a2a2a;border-radius:4px;"></div>
<div class="a" style="left:319px;top:933px;width:189px;height:19px;background:linear-gradient(#aaaaaa,#a0a0a0);border-radius:0 3px 3px 0"></div>
<div class="a" style="left:446px;top:933px;width:62px;height:19px;background:linear-gradient(#9e9e9e,#929292);border-radius:0 3px 3px 0"></div>
<div class="a" style="left:319px;top:933px;width:1px;height:19px;background:#2a2a2a"></div>
<div class="a" style="left:446px;top:933px;width:1px;height:19px;background:#2a2a2a"></div>
<div class="a" style="left:467px;top:933px;width:1px;height:19px;background:#2a2a2a"></div>
<div class="a" style="left:488px;top:933px;width:1px;height:19px;background:#2a2a2a"></div>
<svg width="16" height="16" style="left:290px;top:934.5px"><circle cx="8" cy="8" r="7" fill="url(#sph)" stroke="#1a1a1a"/><path d="M8,8 L15,8 A7,7 0 0 1 8,15 Z" fill="#b87060" opacity="0.85"/><circle cx="8" cy="8" r="7" fill="none" stroke="#1a1a1a"/><ellipse cx="5.5" cy="5.5" rx="2.5" ry="2" fill="#fff" opacity="0.7"/></svg>
<svg width="12" height="16" style="left:307px;top:934.5px"><polygon points="6,1.5 9,6.5 3,6.5" fill="#a0a0a0"/><polygon points="6,14.5 9,9.5 3,9.5" fill="#a0a0a0"/></svg>
<div class="t" style="left:327px;top:937px;font-size:13px;color:#000">Material</div>
<div class="t" style="left:452px;top:937px;font-size:13px;color:#000">F</div>
<svg width="16" height="16" style="left:469px;top:935px"><path d="M8,2 V14 M2,8 H14" stroke="#222" stroke-width="4"/><path d="M8,3 V13 M3,8 H13" stroke="#f4f4f4" stroke-width="2"/></svg>
<svg width="16" height="16" style="left:490px;top:935px"><path d="M3,3 L13,13 M13,3 L3,13" stroke="#222" stroke-width="4"/><path d="M3.5,3.5 L12.5,12.5 M12.5,3.5 L3.5,12.5" stroke="#f4f4f4" stroke-width="2"/></svg>
<div class="a" style="left:517px;top:935px;width:16px;height:16px;background:linear-gradient(#3a3a3a,#464646);border:1px solid #2a2a2a;border-radius:3px;"></div>
<svg width="16" height="16" style="left:517px;top:934px"><path d="M3.5,8 L7,11.5 L13,3" fill="none" stroke="#f0f0f0" stroke-width="2.2"/></svg>
<div class="t" style="left:539px;top:937px;font-size:13px;color:#000">Use Nodes</div>
<div class="a" style="left:613px;top:932px;width:21px;height:21px;background:linear-gradient(#9c9c9c,#8e8e8e);border:1px solid #2a2a2a;border-radius:4px;"></div>
<svg width="18" height="18" style="left:615px;top:934px"><path d="M3,15 L8,10" stroke="#222" stroke-width="2"/><polygon points="7,6 12,11 10,13 5,8" fill="#e0e0e0" stroke="#222"/><polygon points="10,3 15,8 12,10 8,6" fill="#e0e0e0" stroke="#222"/></svg>
<div class="a" style="left:639px;top:932px;width:21px;height:21px;background:linear-gradient(#8e8e8e,#868686);border:1px solid #5a5a5a;border-radius:4px;"></div>
<svg width="18" height="18" style="left:641px;top:934px"><path d="M6,16 V8 H4 L9,3 L14,8 H12 V12" fill="none" stroke="#a8a8a8" stroke-width="1.5"/></svg>
<div class="a" style="left:676px;top:932px;width:21px;height:21px;background:linear-gradient(#9c9c9c,#8e8e8e);border:1px solid #2a2a2a;border-radius:4px;"></div>
<svg width="18" height="18" style="left:678px;top:934px"><rect x="3" y="1" width="12" height="5" fill="#e8e8e8" stroke="#222"/><path d="M2,8 L9,12 L16,8" fill="none" stroke="#222" stroke-width="2"/><path d="M2,8 L9,12 L16,8" fill="none" stroke="#6a90d0" stroke-width="1"/><rect x="1" y="13" width="5" height="4" fill="#e8e8e8" stroke="#222"/><rect x="12" y="13" width="5" height="4" fill="#e8e8e8" stroke="#222"/></svg>
<div class="a" style="left:702px;top:932px;width:57px;height:21px;background:linear-gradient(#3a3a3a,#444444);border:1px solid #2a2a2a;border-radius:4px;"></div>
<div class="a" style="left:703px;top:933px;width:19px;height:19px;background:linear-gradient(#9c9c9c,#8e8e8e);border-radius:3px 0 0 3px"></div>
<div class="a" style="left:722px;top:933px;width:1px;height:19px;background:#2a2a2a"></div>
<svg width="18" height="18" style="left:704px;top:934px"><path d="M4,13 L10,7 A2.5,2.5 0 0 1 13.5,10.5 L7.5,16.5" fill="none" stroke="#3a3a3a" stroke-width="4.5"/><path d="M4,13 L10,7 A2.5,2.5 0 0 1 13.5,10.5 L7.5,16.5" fill="none" stroke="#cfcfcf" stroke-width="2.5"/></svg>
<svg width="18" height="18" style="left:725px;top:934px"><g stroke="#f0f0f0"><line x1="6" y1="4" x2="6" y2="17"/><line x1="12" y1="4" x2="12" y2="17"/><line x1="1" y1="10" x2="17" y2="10"/><line x1="1" y1="15" x2="17" y2="15"/></g><circle cx="6" cy="5" r="3.5" fill="#fff" stroke="#3060d0" stroke-width="1.5"/><circle cx="6" cy="5" r="1.2" fill="#3060d0"/></svg>
<svg width="12" height="16" style="left:745px;top:934.5px"><polygon points="6,1.5 9,6.5 3,6.5" fill="#a0a0a0"/><polygon points="6,14.5 9,9.5 3,9.5" fill="#a0a0a0"/></svg>
<div class="a" style="left:764px;top:932px;width:42px;height:21px;background:linear-gradient(#9c9c9c,#8e8e8e);border:1px solid #2a2a2a;border-radius:4px;"></div>
<div class="a" style="left:784px;top:933px;width:1px;height:19px;background:#2a2a2a"></div>
<svg width="18" height="18" style="left:766px;top:934px"><rect x="6" y="3" width="10" height="12" fill="#d8d8c8" stroke="#222"/><rect x="9" y="1" width="4" height="3" fill="#aaa" stroke="#222"/><path d="M2,16 L9,9" stroke="#222" stroke-width="3"/><path d="M2,16 L9,9" stroke="#f0f0f0" stroke-width="1.5"/><polygon points="6,8 10,8 10,12" fill="#f0f0f0" stroke="#222" stroke-width="0.7"/></svg>
<svg width="18" height="18" style="left:786px;top:934px"><rect x="2" y="3" width="10" height="12" fill="#d8d8c8" stroke="#222"/><rect x="5" y="1" width="4" height="3" fill="#aaa" stroke="#222"/><path d="M9,9 L16,16" stroke="#222" stroke-width="3"/><path d="M9,9 L16,16" stroke="#f0f0f0" stroke-width="1.5"/><polygon points="16,12 16,16 12,16" fill="#f0f0f0" stroke="#222" stroke-width="0.7"/></svg>
<div class="a" style="left:57px;top:931px;width:36px;height:22px;background:linear-gradient(#5a86c8,#4a76b8)"></div>
<div class="t" style="left:10px;top:937px;font-size:13px;color:#000">Select</div>
<div class="t" style="left:65px;top:937px;font-size:13px;color:#000">Add</div>
<div class="t" style="left:108px;top:937px;font-size:13px;color:#000">Node</div>
<svg width="1106" height="960" style="left:0;top:0"><path d="M501.5,538.7 C573.25,538.7 573.25,577 645,577" fill="none" stroke="#161616" stroke-width="3.8"/><path d="M501.5,538.7 C573.25,538.7 573.25,577 645,577" fill="none" stroke="#8a8a8a" stroke-width="1.7"/><path d="M508,620.6 C576.5,620.6 576.5,600.7 645,600.7" fill="none" stroke="#161616" stroke-width="3.8"/><path d="M508,620.6 C576.5,620.6 576.5,600.7 645,600.7" fill="none" stroke="#8a8a8a" stroke-width="1.7"/><path d="M509.6,764.4 C577.3,764.4 577.3,623.4 645,623.4" fill="none" stroke="#161616" stroke-width="3.8"/><path d="M509.6,764.4 C577.3,764.4 577.3,623.4 645,623.4" fill="none" stroke="#8a8a8a" stroke-width="1.7"/><path d="M794,556 C862.75,556 862.75,568.4 931.5,568.4" fill="none" stroke="#161616" stroke-width="3.8"/><path d="M794,556 C862.75,556 862.75,568.4 931.5,568.4" fill="none" stroke="#ececec" stroke-width="1.7"/></svg>
<div class="a" style="left:351px;top:361px;width:152px;height:212px;border-radius:8px;border:1px solid #1e1e1e;background:rgba(106,106,106,0.7);box-shadow:0 1px 6px 1px rgba(0,0,0,0.45);overflow:hidden"><div class="a" style="left:0;top:0;width:152px;height:21px;background:rgba(40,40,40,0.29)"></div></div><svg width="12" height="12" style="left:357px;top:369px"><polygon points="0,0 10.5,0 5.25,10.5" fill="#3e3e3e"/></svg><div class="t" style="left:375px;top:369px;font-size:12.5px;color:#000">Geometry</div>
<div class="t" style="right:628px;top:394.6px;font-size:12.5px;color:#000">Position</div>
<div class="a" style="left:496.0px;top:394.1px;width:11px;height:11px;border-radius:50%;background:#6363c7;border:1px solid #1e1e1e"></div>
<div class="t" style="right:628px;top:417.7px;font-size:12.5px;color:#000">Normal</div>
<div class="a" style="left:496.0px;top:417.2px;width:11px;height:11px;border-radius:50%;background:#6363c7;border:1px solid #1e1e1e"></div>
<div class="t" style="right:628px;top:440.7px;font-size:12.5px;color:#000">Tangent</div>
<div class="a" style="left:496.0px;top:440.2px;width:11px;height:11px;border-radius:50%;background:#6363c7;border:1px solid #1e1e1e"></div>
<div class="t" style="right:628px;top:463.8px;font-size:12.5px;color:#000">True Normal</div>
<div class="a" style="left:496.0px;top:463.3px;width:11px;height:11px;border-radius:50%;background:#6363c7;border:1px solid #1e1e1e"></div>
<div class="t" style="right:628px;top:486.8px;font-size:12.5px;color:#000">Incoming</div>
<div class="a" style="left:496.0px;top:486.3px;width:11px;height:11px;border-radius:50%;background:#6363c7;border:1px solid #1e1e1e"></div>
<div class="t" style="right:628px;top:510.4px;font-size:12.5px;color:#000">Parametric</div>
<div class="a" style="left:496.0px;top:509.9px;width:11px;height:11px;border-radius:50%;background:#6363c7;border:1px solid #1e1e1e"></div>
<div class="t" style="right:628px;top:533.7px;font-size:12.5px;color:#000">Backfacing</div>
<div class="a" style="left:496.0px;top:533.2px;width:11px;height:11px;border-radius:50%;background:#a1a1a1;border:1px solid #1e1e1e"></div>
<div class="t" style="right:628px;top:556.9px;font-size:12.5px;color:#000">Pointiness</div>
<div class="a" style="left:496.0px;top:556.4px;width:11px;height:11px;border-radius:50%;background:#a1a1a1;border:1px solid #1e1e1e"></div>
<div class="a" style="left:348px;top:583px;width:161px;height:122px;border-radius:8px;border:1px solid #1e1e1e;background:rgba(106,106,106,0.7);box-shadow:0 1px 6px 1px rgba(0,0,0,0.45);overflow:hidden"><div class="a" style="left:0;top:0;width:161px;height:21px;background:rgba(40,40,40,0.29)"></div></div><svg width="12" height="12" style="left:354px;top:591px"><polygon points="0,0 10.5,0 5.25,10.5" fill="#3e3e3e"/></svg><div class="t" style="left:372px;top:591px;font-size:12.5px;color:#000">Diffuse BSDF</div><div class="t" style="right:621px;top:616px;font-size:12.5px;color:#000">BSDF</div><div class="a" style="left:502.5px;top:615.1px;width:11px;height:11px;border-radius:50%;background:#63c763;border:1px solid #1e1e1e"></div><div class="a" style="left:359px;top:632px;width:31px;height:21px;border-radius:4px;border:1px solid #2a2a2a;background:#e84a0c"></div><div class="t" style="left:406px;top:638px;font-size:12.5px;color:#000">Color</div><div class="a" style="left:342.5px;top:636.5px;width:11px;height:11px;border-radius:50%;background:#c7c729;border:1px solid #1e1e1e"></div><div class="a" style="left:359px;top:655px;width:138px;height:21px;border-radius:10px;border:1px solid #2a2a2a;background:linear-gradient(#b8b8b8,#a8a8a8);overflow:hidden"><div class="a" style="left:0;top:0;width:10px;height:19px;background:linear-gradient(#6a6a6a,#5a5a5a)"></div></div><div class="t" style="left:374px;top:661px;font-size:12.5px;color:#000">Roughness:</div><div class="t" style="left:449px;top:661px;font-size:12.5px;color:#000">0.000</div><div class="a" style="left:342.5px;top:659.5px;width:11px;height:11px;border-radius:50%;background:#a1a1a1;border:1px solid #1e1e1e"></div><div class="t" style="left:367px;top:684px;font-size:12.5px;color:#000">Normal</div><div class="a" style="left:342.5px;top:682.9px;width:11px;height:11px;border-radius:50%;background:#6363c7;border:1px solid #1e1e1e"></div>
<div class="a" style="left:349px;top:727px;width:161px;height:122px;border-radius:8px;border:1px solid #1e1e1e;background:rgba(106,106,106,0.7);box-shadow:0 1px 6px 1px rgba(0,0,0,0.45);overflow:hidden"><div class="a" style="left:0;top:0;width:161px;height:21px;background:rgba(40,40,40,0.29)"></div></div><svg width="12" height="12" style="left:355px;top:735px"><polygon points="0,0 10.5,0 5.25,10.5" fill="#3e3e3e"/></svg><div class="t" style="left:373px;top:735px;font-size:12.5px;color:#000">Diffuse BSDF</div><div class="t" style="right:620px;top:760px;font-size:12.5px;color:#000">BSDF</div><div class="a" style="left:503.5px;top:759.1px;width:11px;height:11px;border-radius:50%;background:#63c763;border:1px solid #1e1e1e"></div><div class="a" style="left:360px;top:776px;width:31px;height:21px;border-radius:4px;border:1px solid #2a2a2a;background:#58a8f0"></div><div class="t" style="left:407px;top:782px;font-size:12.5px;color:#000">Color</div><div class="a" style="left:343.5px;top:780.5px;width:11px;height:11px;border-radius:50%;background:#c7c729;border:1px solid #1e1e1e"></div><div class="a" style="left:360px;top:799px;width:138px;height:21px;border-radius:10px;border:1px solid #2a2a2a;background:linear-gradient(#b8b8b8,#a8a8a8);overflow:hidden"><div class="a" style="left:0;top:0;width:10px;height:19px;background:linear-gradient(#6a6a6a,#5a5a5a)"></div></div><div class="t" style="left:375px;top:805px;font-size:12.5px;color:#000">Roughness:</div><div class="t" style="left:450px;top:805px;font-size:12.5px;color:#000">0.000</div><div class="a" style="left:343.5px;top:803.5px;width:11px;height:11px;border-radius:50%;background:#a1a1a1;border:1px solid #1e1e1e"></div><div class="t" style="left:368px;top:828px;font-size:12.5px;color:#000">Normal</div><div class="a" style="left:343.5px;top:826.9px;width:11px;height:11px;border-radius:50%;background:#6363c7;border:1px solid #1e1e1e"></div>
<div class="a" style="left:644px;top:518px;width:150px;height:122px;border-radius:8px;border:1px solid #1e1e1e;background:rgba(106,106,106,0.7);box-shadow:0 1px 6px 1px rgba(0,0,0,0.45);overflow:hidden"><div class="a" style="left:0;top:0;width:150px;height:21px;background:rgba(40,40,40,0.29)"></div></div><svg width="12" height="12" style="left:650px;top:526px"><polygon points="0,0 10.5,0 5.25,10.5" fill="#3e3e3e"/></svg><div class="t" style="left:668px;top:526px;font-size:12.5px;color:#000">Mix Shader</div>
<div class="t" style="right:338px;top:552px;font-size:12.5px;color:#000">Shader</div>
<div class="a" style="left:788.5px;top:550.5px;width:11px;height:11px;border-radius:50%;background:#63c763;border:1px solid #1e1e1e"></div>
<div class="t" style="left:662px;top:573px;font-size:12.5px;color:#000">Fac</div>
<div class="a" style="left:639.5px;top:571.5px;width:11px;height:11px;border-radius:50%;background:#a1a1a1;border:1px solid #1e1e1e"></div>
<div class="t" style="left:662px;top:597px;font-size:12.5px;color:#000">Shader</div>
<div class="a" style="left:639.5px;top:595.2px;width:11px;height:11px;border-radius:50%;background:#63c763;border:1px solid #1e1e1e"></div>
<div class="t" style="left:662px;top:620px;font-size:12.5px;color:#000">Shader</div>
<div class="a" style="left:639.5px;top:617.9px;width:11px;height:11px;border-radius:50%;background:#63c763;border:1px solid #1e1e1e"></div>
<div class="a" style="left:931px;top:536px;width:150px;height:95px;border-radius:8px;border:1px solid #f0a030;background:rgba(106,106,106,0.7);box-shadow:0 1px 6px 1px rgba(0,0,0,0.45);overflow:hidden"><div class="a" style="left:0;top:0;width:150px;height:21px;background:rgba(40,40,40,0.29)"></div></div><svg width="12" height="12" style="left:937px;top:544px"><polygon points="0,0 10.5,0 5.25,10.5" fill="#d0601c"/></svg><div class="t" style="left:955px;top:544px;font-size:12.5px;color:#000">Material Output</div>
<div class="t" style="left:948px;top:564px;font-size:12.5px;color:#000">Surface</div>
<div class="a" style="left:926.0px;top:562.9px;width:11px;height:11px;border-radius:50%;background:#63c763;border:1px solid #1e1e1e"></div>
<div class="t" style="left:948px;top:587px;font-size:12.5px;color:#000">Volume</div>
<div class="a" style="left:926.0px;top:585.9px;width:11px;height:11px;border-radius:50%;background:#63c763;border:1px solid #1e1e1e"></div>
<div class="t" style="left:948px;top:611px;font-size:12.5px;color:#000">Displacement</div>
<div class="a" style="left:926.0px;top:609.1px;width:11px;height:11px;border-radius:50%;background:#a1a1a1;border:1px solid #1e1e1e"></div>
<div class="a" style="left:175px;top:561px;width:164px;height:349px;background:#1c1c1c;border:1px solid #161616;border-radius:5px;box-shadow:0 2px 8px 1px rgba(0,0,0,0.5)"></div>
<div class="a" style="left:176px;top:634px;width:162px;height:19px;background:linear-gradient(#7ea6e6,#5d8ad2)"></div>
<div class="t" style="left:205px;top:569.1px;font-size:13px;color:#f0f0f0"><span style="text-decoration:underline;text-underline-offset:2px;text-decoration-thickness:1px;text-decoration-color:#b0b0b0">A</span>ttribute</div>
<div class="t" style="left:205px;top:592.1px;font-size:13px;color:#f0f0f0"><span style="text-decoration:underline;text-underline-offset:2px;text-decoration-thickness:1px;text-decoration-color:#b0b0b0">C</span>amera Data</div>
<div class="t" style="left:205px;top:615.1px;font-size:13px;color:#f0f0f0"><span style="text-decoration:underline;text-underline-offset:2px;text-decoration-thickness:1px;text-decoration-color:#b0b0b0">F</span>resnel</div>
<div class="t" style="left:205px;top:638.1px;font-size:13px;color:#000"><span style="text-decoration:underline;text-underline-offset:2px;text-decoration-thickness:1px;text-decoration-color:#b0b0b0">G</span>eometry</div>
<div class="t" style="left:205px;top:661.1px;font-size:13px;color:#f0f0f0"><span style="text-decoration:underline;text-underline-offset:2px;text-decoration-thickness:1px;text-decoration-color:#b0b0b0">H</span>air Info</div>
<div class="t" style="left:205px;top:684.1px;font-size:13px;color:#f0f0f0"><span style="text-decoration:underline;text-underline-offset:2px;text-decoration-thickness:1px;text-decoration-color:#b0b0b0">L</span>ayer Weight</div>
<div class="t" style="left:205px;top:707.1px;font-size:13px;color:#f0f0f0">Light <span style="text-decoration:underline;text-underline-offset:2px;text-decoration-thickness:1px;text-decoration-color:#b0b0b0">P</span>ath</div>
<div class="t" style="left:205px;top:730.1px;font-size:13px;color:#f0f0f0"><span style="text-decoration:underline;text-underline-offset:2px;text-decoration-thickness:1px;text-decoration-color:#b0b0b0">O</span>bject Info</div>
<div class="t" style="left:205px;top:753.1px;font-size:13px;color:#f0f0f0">Particle <span style="text-decoration:underline;text-underline-offset:2px;text-decoration-thickness:1px;text-decoration-color:#b0b0b0">I</span>nfo</div>
<div class="t" style="left:205px;top:776.1px;font-size:13px;color:#f0f0f0"><span style="text-decoration:underline;text-underline-offset:2px;text-decoration-thickness:1px;text-decoration-color:#b0b0b0">R</span>GB</div>
<div class="t" style="left:205px;top:799.1px;font-size:13px;color:#f0f0f0"><span style="text-decoration:underline;text-underline-offset:2px;text-decoration-thickness:1px;text-decoration-color:#b0b0b0">T</span>angent</div>
<div class="t" style="left:205px;top:822.1px;font-size:13px;color:#f0f0f0">T<span style="text-decoration:underline;text-underline-offset:2px;text-decoration-thickness:1px;text-decoration-color:#b0b0b0">e</span>xture Coordinate</div>
<div class="t" style="left:205px;top:845.1px;font-size:13px;color:#f0f0f0"><span style="text-decoration:underline;text-underline-offset:2px;text-decoration-thickness:1px;text-decoration-color:#b0b0b0">U</span>V Map</div>
<div class="t" style="left:205px;top:868.1px;font-size:13px;color:#f0f0f0"><span style="text-decoration:underline;text-underline-offset:2px;text-decoration-thickness:1px;text-decoration-color:#b0b0b0">V</span>alue</div>
<div class="t" style="left:205px;top:891.1px;font-size:13px;color:#f0f0f0"><span style="text-decoration:underline;text-underline-offset:2px;text-decoration-thickness:1px;text-decoration-color:#b0b0b0">W</span>ireframe</div>
<div class="a" style="left:57px;top:691px;width:118px;height:240px;background:#1c1c1c;border:1px solid #161616;border-bottom:none;border-radius:5px 5px 0 0;box-shadow:0 2px 8px 1px rgba(0,0,0,0.5)"></div>
<div class="a" style="left:58px;top:887px;width:116px;height:19px;background:linear-gradient(#7ea6e6,#5d8ad2)"></div>
<div class="t" style="left:87px;top:702.2px;font-size:13px;color:#f0f0f0"><span style="text-decoration:underline;text-underline-offset:2px;text-decoration-thickness:1px;text-decoration-color:#b0b0b0">L</span>ayout</div>
<svg width="8" height="10" style="left:163px;top:704px"><polygon points="0.5,0.5 6,4.7 0.5,9" fill="#7a7a7a"/></svg>
<div class="t" style="left:87px;top:723.2px;font-size:13px;color:#f0f0f0"><span style="text-decoration:underline;text-underline-offset:2px;text-decoration-thickness:1px;text-decoration-color:#b0b0b0">G</span>roup</div>
<svg width="8" height="10" style="left:163px;top:725px"><polygon points="0.5,0.5 6,4.7 0.5,9" fill="#7a7a7a"/></svg>
<div class="t" style="left:87px;top:744.2px;font-size:13px;color:#f0f0f0">Scr<span style="text-decoration:underline;text-underline-offset:2px;text-decoration-thickness:1px;text-decoration-color:#b0b0b0">i</span>pt</div>
<svg width="8" height="10" style="left:163px;top:746px"><polygon points="0.5,0.5 6,4.7 0.5,9" fill="#7a7a7a"/></svg>
<div class="t" style="left:87px;top:765.2px;font-size:13px;color:#f0f0f0">Co<span style="text-decoration:underline;text-underline-offset:2px;text-decoration-thickness:1px;text-decoration-color:#b0b0b0">n</span>verter</div>
<svg width="8" height="10" style="left:163px;top:767px"><polygon points="0.5,0.5 6,4.7 0.5,9" fill="#7a7a7a"/></svg>
<div class="t" style="left:87px;top:786.2px;font-size:13px;color:#f0f0f0"><span style="text-decoration:underline;text-underline-offset:2px;text-decoration-thickness:1px;text-decoration-color:#b0b0b0">V</span>ector</div>
<svg width="8" height="10" style="left:163px;top:788px"><polygon points="0.5,0.5 6,4.7 0.5,9" fill="#7a7a7a"/></svg>
<div class="t" style="left:87px;top:807.2px;font-size:13px;color:#f0f0f0"><span style="text-decoration:underline;text-underline-offset:2px;text-decoration-thickness:1px;text-decoration-color:#b0b0b0">C</span>olor</div>
<svg width="8" height="10" style="left:163px;top:809px"><polygon points="0.5,0.5 6,4.7 0.5,9" fill="#7a7a7a"/></svg>
<div class="t" style="left:87px;top:828.2px;font-size:13px;color:#f0f0f0"><span style="text-decoration:underline;text-underline-offset:2px;text-decoration-thickness:1px;text-decoration-color:#b0b0b0">T</span>exture</div>
<svg width="8" height="10" style="left:163px;top:830px"><polygon points="0.5,0.5 6,4.7 0.5,9" fill="#7a7a7a"/></svg>
<div class="t" style="left:87px;top:849.2px;font-size:13px;color:#f0f0f0">S<span style="text-decoration:underline;text-underline-offset:2px;text-decoration-thickness:1px;text-decoration-color:#b0b0b0">h</span>ader</div>
<svg width="8" height="10" style="left:163px;top:851px"><polygon points="0.5,0.5 6,4.7 0.5,9" fill="#7a7a7a"/></svg>
<div class="t" style="left:87px;top:870.2px;font-size:13px;color:#f0f0f0"><span style="text-decoration:underline;text-underline-offset:2px;text-decoration-thickness:1px;text-decoration-color:#b0b0b0">O</span>utput</div>
<svg width="8" height="10" style="left:163px;top:872px"><polygon points="0.5,0.5 6,4.7 0.5,9" fill="#7a7a7a"/></svg>
<div class="t" style="left:87px;top:891.2px;font-size:13px;color:#000"><span style="text-decoration:underline;text-underline-offset:2px;text-decoration-thickness:1px;text-decoration-color:#b0b0b0">I</span>nput</div>
<svg width="8" height="10" style="left:163px;top:893px"><polygon points="0.5,0.5 6,4.7 0.5,9" fill="#7a7a7a"/></svg>
<div class="t" style="left:87px;top:912.2px;font-size:13px;color:#f0f0f0"><span style="text-decoration:underline;text-underline-offset:2px;text-decoration-thickness:1px;text-decoration-color:#b0b0b0">S</span>earch ...</div>
<svg width="1106" height="960" style="left:0;top:0;z-index:20"><defs><filter id="glow" filterUnits="userSpaceOnUse" x="0" y="0" width="1106" height="960"><feGaussianBlur stdDeviation="0.7"/></filter></defs><path d="M523,530 L631,565" fill="none" stroke="#f4f400" stroke-width="6.5" stroke-linecap="round" filter="url(#glow)"/><path d="M671,544 L714,545" fill="none" stroke="#f4f400" stroke-width="6.5" stroke-linecap="round" filter="url(#glow)"/><path d="M176,655 Q260,653 334,651.5" fill="none" stroke="#f4f400" stroke-width="6.5" stroke-linecap="round" filter="url(#glow)"/><path d="M59,907 Q120,910 169,909" fill="none" stroke="#f4f400" stroke-width="6.5" stroke-linecap="round" filter="url(#glow)"/><path d="M60.2,935 L57.5,950" fill="none" stroke="#f4f400" stroke-width="6.5" stroke-linecap="round" filter="url(#glow)"/><path d="M94.7,934.5 L95.6,955" fill="none" stroke="#f4f400" stroke-width="6.5" stroke-linecap="round" filter="url(#glow)"/><path d="M62,954.5 L96,956.5" fill="none" stroke="#f4f400" stroke-width="6.5" stroke-linecap="round" filter="url(#glow)"/></svg>
</body></html>
